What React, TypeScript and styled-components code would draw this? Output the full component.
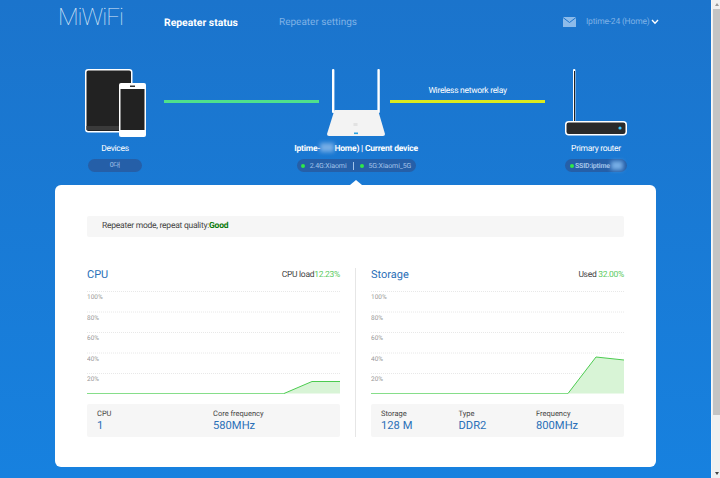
import styled, { createGlobalStyle } from 'styled-components';

const GlobalStyle = createGlobalStyle`
  html, body {
    margin: 0;
    height: 478px;
    overflow: hidden;
    font-family: Roboto, "Liberation Sans", sans-serif;
    text-rendering: geometricPrecision;
  }
`;

const Shell = styled.div`
  display: flex;
  width: 720px;
  height: 478px;
`;

const Page = styled.div`
  width: 711px;
  height: 478px;
  overflow: hidden;
  background: linear-gradient(180deg, #1b74cc 0%, #1781df 100%);
`;

const Scrollbar = styled.div`
  display: flex;
  flex-direction: column;
  align-items: center;
  justify-content: space-between;
  box-sizing: border-box;
  width: 9px;
  padding-left: 1px;
  background: #f0f0f0;
  border-left: 1px solid #f8f8f8;
`;

const ScrollArrow = styled.i<{ $down?: boolean }>`
  flex: none;
  width: 0;
  height: 0;
  margin: 3px 0;
  border-left: 2.5px solid transparent;
  border-right: 2.5px solid transparent;
  border-top: ${({ $down }) => ($down ? '3px solid #444' : 'none')};
  border-bottom: ${({ $down }) => ($down ? 'none' : '3px solid #999')};
`;

const ScrollThumb = styled.div`
  align-self: stretch;
  height: 410px;
  margin-bottom: 54px;
  background: #c4c4c4;
`;

const Header = styled.header`
  display: flex;
  align-items: center;
  height: 44px;
  padding-left: 58px;
  color: #fff;
`;

const Logo = styled.div`
  width: 106px;
  font-weight: 100;
  font-size: 24px;
  letter-spacing: -1px;
  line-height: 1;
  margin-top: -10px;
  color: #dbe9f8;
`;

const NavItem = styled.a<{ $active?: boolean }>`
  width: ${({ $active }) => ($active ? '115px' : '284px')};
  font-size: ${({ $active }) => ($active ? '10.4px' : '10px')};
  font-weight: ${({ $active }) => ($active ? 700 : 400)};
  color: ${({ $active }) => ($active ? '#fff' : '#7fb2e6')};
  white-space: nowrap;
`;

const Account = styled.div`
  display: flex;
  align-items: center;
  gap: 2px;
  font-size: 8.5px;
  letter-spacing: -0.2px;
  color: #7fb2e6;
  white-space: nowrap;
`;

const MailIcon = styled.svg`
  width: 13px;
  height: 10px;
  margin-right: 8px;
`;

const Diagram = styled.section`
  display: flex;
  align-items: flex-start;
  height: 116px;
  margin-top: 25px;
  padding-left: 78px;
`;

const Node = styled.div<{ $width: number }>`
  display: flex;
  flex-direction: column;
  align-items: center;
  flex: none;
  width: ${({ $width }) => $width}px;
`;

const NodeIcon = styled.svg`
  display: block;
  height: 68px;
`;

const NodeName = styled.div<{ $bold?: boolean }>`
  margin-top: 5px;
  height: 15px;
  line-height: 15px;
  font-size: 8.5px;
  letter-spacing: ${({ $bold }) => ($bold ? '-0.2px' : '-0.3px')};
  font-weight: ${({ $bold }) => ($bold ? 700 : 400)};
  color: #fff;
  white-space: nowrap;
`;

const Blurred = styled.span<{ $width: number }>`
  display: inline-block;
  width: ${({ $width }) => $width}px;
  height: 9px;
  vertical-align: -1px;
  background: #77aee6;
  filter: blur(2px);
`;

const Pill = styled.div<{ $width: number; $start?: boolean }>`
  display: flex;
  align-items: center;
  justify-content: ${({ $start }) => ($start ? 'flex-start' : 'center')};
  gap: ${({ $start }) => ($start ? '1px' : '5px')};
  box-sizing: border-box;
  width: ${({ $width }) => $width}px;
  height: 13px;
  margin-top: 2px;
  padding-left: ${({ $start }) => ($start ? '5px' : '0')};
  border-radius: 7px;
  background: #255fa8;
  color: #a2c3e8;
  font-size: 7px;
  letter-spacing: ${({ $start }) => ($start ? '-0.2px' : '-0.1px')};
  white-space: nowrap;
`;

const Dot = styled.i`
  flex: none;
  width: 4px;
  height: 4px;
  border-radius: 50%;
  background: #2fe84a;
`;

const PillDivider = styled.i`
  flex: none;
  width: 1px;
  height: 8px;
  margin: 0 1px 0 1px;
  background: #a2c3e8;
`;

const Link = styled.div<{ $left: number; $right: number }>`
  display: flex;
  flex-direction: column;
  align-items: center;
  justify-content: flex-end;
  flex: none;
  width: 155px;
  height: 34px;
  margin-left: ${({ $left }) => $left}px;
  margin-right: ${({ $right }) => $right}px;
`;

const LinkLabel = styled.div`
  margin-bottom: 3px;
  font-size: 8.5px;
  letter-spacing: -0.3px;
  line-height: 12px;
  color: #fff;
`;

const LinkBar = styled.div<{ $color: string }>`
  width: 100%;
  height: 3px;
  flex: none;
  background: ${({ $color }) => $color};
`;

const Panel = styled.main`
  position: relative;
  box-sizing: border-box;
  width: 601px;
  height: 282px;
  margin: 0 0 0 55px;
  padding: 31px 32px 0;
  border-radius: 6px;
  background: #fff;
  &::before {
    content: '';
    position: absolute;
    top: -5px;
    left: 295px;
    border-left: 6px solid transparent;
    border-right: 6px solid transparent;
    border-bottom: 5px solid #fff;
  }
`;

const Banner = styled.div`
  height: 21px;
  padding-left: 15px;
  line-height: 21px;
  font-size: 8.5px;
  letter-spacing: -0.25px;
  color: #444;
  background: #f6f6f6;
  border-radius: 2px;
`;

const Quality = styled.b`
  color: #0a7a0a;
`;

const Columns = styled.div`
  display: flex;
  margin-top: 31px;
`;

const Column = styled.section<{ $divided?: boolean }>`
  box-sizing: content-box;
  width: 253px;
  height: 169px;
  ${({ $divided }) =>
    $divided
      ? 'padding-right: 15px; border-right: 1px solid #e6e6e6; margin-right: 15px;'
      : ''}
`;

const ColumnHead = styled.div`
  display: flex;
  align-items: center;
  justify-content: space-between;
  height: 13px;
`;

const ColumnTitle = styled.h2`
  margin: 0;
  font-size: 11px;
  font-weight: 400;
  color: #2b70b8;
`;

const Usage = styled.div`
  font-size: 8.5px;
  letter-spacing: -0.3px;
  color: #444;
`;

const UsageValue = styled.span`
  color: #5ccb62;
`;

const Chart = styled.svg`
  display: block;
  width: 253px;
  height: 103px;
  margin-top: 10px;
`;

const Stats = styled.div`
  display: grid;
  grid-template-columns: 116px 1fr;
  height: 33px;
  margin-top: 10px;
  padding: 4px 0 0 10px;
  box-sizing: border-box;
  background: #f6f6f6;
  border-radius: 2px;
`;

const StatsWide = styled(Stats)`
  grid-template-columns: 77.5px 77.5px 1fr;
`;

const StatLabel = styled.div`
  font-size: 7.5px;
  line-height: 11px;
  color: #444;
`;

const StatValue = styled.div`
  font-size: 11.2px;
  line-height: 14px;
  color: #2b70b8;
`;

const grid = [100, 80, 60, 40, 20];

function LoadChart({ rise }: { rise: string }) {
  return (
    <Chart viewBox="0 0 253 103">
      {grid.map((pct, i) => (
        <g key={pct}>
          <line x1="0" x2="253" y1={0.5 + i * 20.5} y2={0.5 + i * 20.5} stroke="#e8e8e8" strokeDasharray="1 1" />
          <text x="0" y={8 + i * 20.5} fontSize="6.5" fill="#999" fontFamily="Roboto, sans-serif">
            {pct}%
          </text>
        </g>
      ))}
      <path d={`M197 102.5 ${rise} L253 102.5 Z`} fill="#d8f4d6" />
      <path d="M0 102.5 H197" fill="none" stroke="#86de8a" strokeWidth="1" />
      <path d={`M197 102.5 ${rise}`} fill="none" stroke="#4ccb50" strokeWidth="1" />
    </Chart>
  );
}

export default function App() {
  return (
    <Shell>
      <GlobalStyle />
      <Page>
        <Header>
          <Logo>MiWiFi</Logo>
          <NavItem $active>Repeater status</NavItem>
          <NavItem>Repeater settings</NavItem>
          <Account>
            <MailIcon viewBox="0 0 13 10">
              <rect width="13" height="10" fill="#8dbbea" />
              <path d="M0 0.5 6.5 5.5 13 0.5" fill="none" stroke="#1b74cc" strokeWidth="1" />
            </MailIcon>
            Iptime-24 (Home)
            <svg width="8" height="6" viewBox="0 0 8 6">
              <path d="M1 1 4 4.2 7 1" fill="none" stroke="#fff" strokeWidth="1.4" />
            </svg>
          </Account>
        </Header>

        <Diagram>
          <Node $width={74}>
            <NodeIcon viewBox="0 0 61 68" style={{ width: 61 }}>
              <rect x="0.75" y="0.75" width="46" height="62" rx="2.5" fill="#222" stroke="#fff" strokeWidth="1.5" />
              <rect x="1.5" y="57" width="44" height="4" fill="#3a3a3a" />
              <rect x="34" y="14" width="27" height="54" rx="2" fill="#fff" />
              <rect x="35.5" y="20" width="24" height="41" fill="#222" />
              <rect x="45" y="16.5" width="5" height="1.5" fill="#333" />
            </NodeIcon>
            <NodeName>Devices</NodeName>
            <Pill $width={54}>0대</Pill>
          </Node>
          <Link $left={12} $right={-25}>
            <LinkBar $color="#4fe08c" />
          </Link>
          <Node $width={124}>
            <NodeIcon viewBox="0 0 58 68" style={{ width: 58 }}>
              <rect x="5" y="0" width="2.4" height="44" rx="1" fill="#fff" />
              <rect x="50.4" y="0" width="2.4" height="44" rx="1" fill="#fff" />
              <path d="M7.5 41 H51 L58 65 Q58 67 56 67 H2 Q0 67 0 65 Z" fill="#f3f3f3" />
              <rect x="26.5" y="54" width="4" height="3" fill="#e2e2e2" />
              <rect x="27" y="63.5" width="4" height="1.6" fill="#2aa0e0" />
            </NodeIcon>
            <NodeName $bold>
              Iptime-<Blurred $width={14} />Home) | Current device
            </NodeName>
            <Pill $width={119}>
              <Dot />
              2.4G:Xiaomi
              <PillDivider />
              <Dot />
              5G:Xiaomi_5G
            </Pill>
          </Node>
          <Link $left={-28} $right={20}>
            <LinkLabel>Wireless network relay</LinkLabel>
            <LinkBar $color="#dcea1e" />
          </Link>
          <Node $width={62}>
            <NodeIcon viewBox="0 0 62 68" style={{ width: 62 }}>
              <rect x="8" y="0" width="2.4" height="54" rx="1" fill="#fff" />
              <rect x="9" y="2" width="1" height="51" fill="#222" />
              <rect x="0.75" y="52.75" width="60.5" height="13" rx="3" fill="#2a2a2a" stroke="#fff" strokeWidth="1.5" />
              <circle cx="55" cy="59" r="1.6" fill="#39c6ff" />
            </NodeIcon>
            <NodeName>Primary router</NodeName>
            <Pill $width={62} $start>
              <Dot />
              <b>SSID:iptime</b>
              <Blurred $width={12} />
            </Pill>
          </Node>
        </Diagram>

        <Panel>
          <Banner>
            Repeater mode, repeat quality:<Quality>Good</Quality>
          </Banner>
          <Columns>
            <Column $divided>
              <ColumnHead>
                <ColumnTitle>CPU</ColumnTitle>
                <Usage>
                  CPU load<UsageValue>12.23%</UsageValue>
                </Usage>
              </ColumnHead>
              <LoadChart rise="L225 90.5 L253 90.5" />
              <Stats>
                <div>
                  <StatLabel>CPU</StatLabel>
                  <StatValue>1</StatValue>
                </div>
                <div>
                  <StatLabel>Core frequency</StatLabel>
                  <StatValue>580MHz</StatValue>
                </div>
              </Stats>
            </Column>
            <Column>
              <ColumnHead>
                <ColumnTitle>Storage</ColumnTitle>
                <Usage>
                  Used <UsageValue>32.00%</UsageValue>
                </Usage>
              </ColumnHead>
              <LoadChart rise="L225 66 L253 69" />
              <StatsWide>
                <div>
                  <StatLabel>Storage</StatLabel>
                  <StatValue>128 M</StatValue>
                </div>
                <div>
                  <StatLabel>Type</StatLabel>
                  <StatValue>DDR2</StatValue>
                </div>
                <div>
                  <StatLabel>Frequency</StatLabel>
                  <StatValue>800MHz</StatValue>
                </div>
              </StatsWide>
            </Column>
          </Columns>
        </Panel>
      </Page>
      <Scrollbar>
        <ScrollArrow />
        <ScrollThumb />
        <ScrollArrow $down />
      </Scrollbar>
    </Shell>
  );
}
